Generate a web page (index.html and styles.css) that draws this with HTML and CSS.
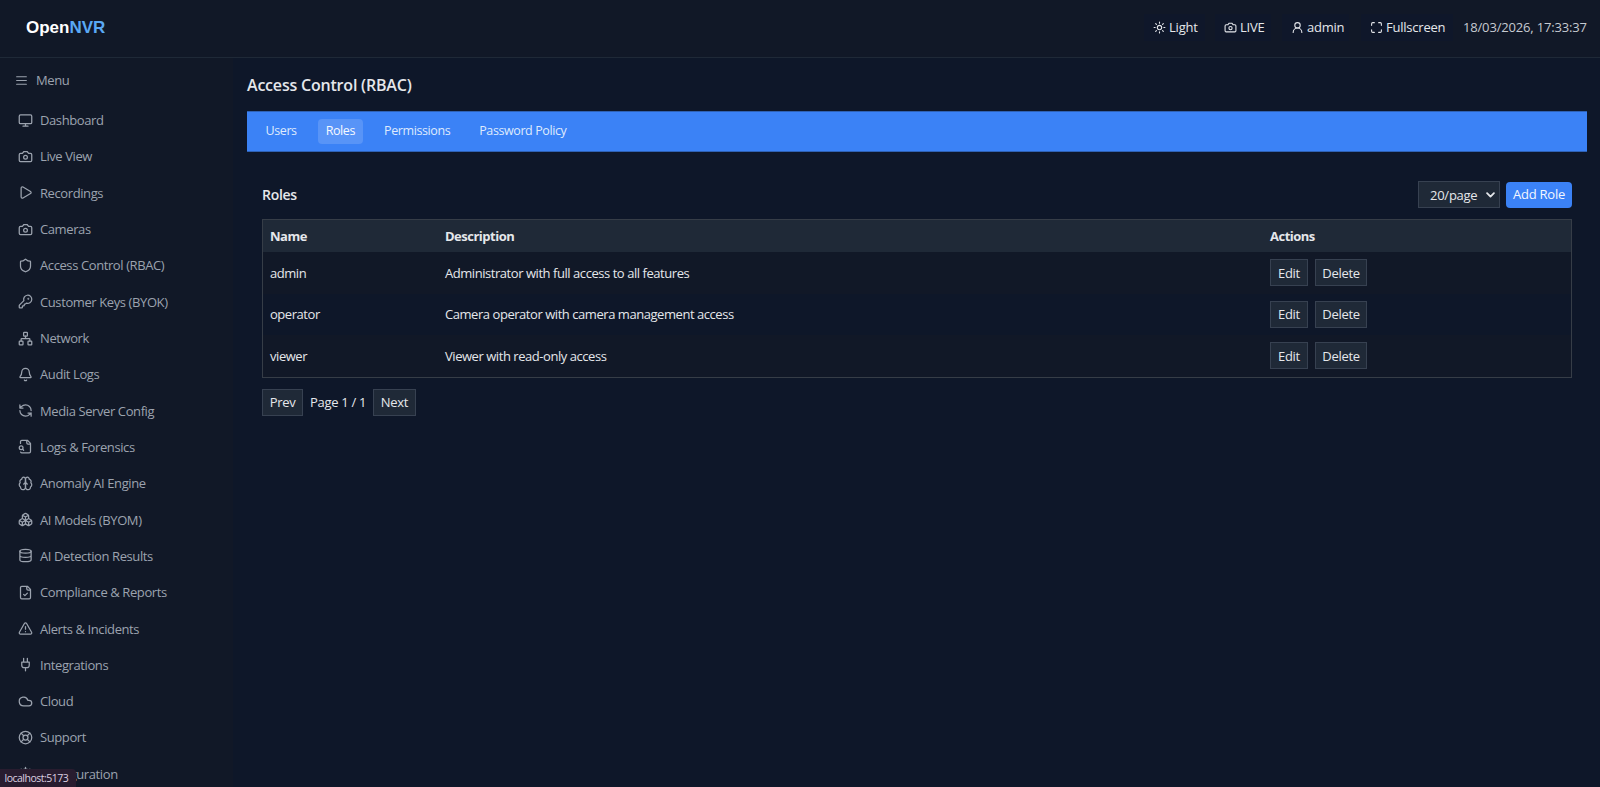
FILE: index.html
```html
<!DOCTYPE html>
<html lang="en">
<head>
  <meta charset="UTF-8" />
  <meta name="viewport" content="width=device-width, initial-scale=1" />
  <title>OpenNVR</title>
  <link rel="stylesheet" href="styles.css">
</head>
<body>

<header class="topbar">
  <div class="logo">Open<span>NVR</span></div>
  <div class="top-actions">
    <button class="chip light"><svg viewBox="0 0 24 24"><circle cx="12" cy="12" r="4"/><path d="M12 2v2M12 20v2M4.93 4.93l1.41 1.41M17.66 17.66l1.41 1.41M2 12h2M20 12h2M6.34 17.66l-1.41 1.41M19.07 4.93l-1.41 1.41"/></svg><span>Light</span></button>
    <button class="chip live"><svg viewBox="0 0 24 24"><path d="M14.5 4h-5L7 7H4a2 2 0 0 0-2 2v9a2 2 0 0 0 2 2h16a2 2 0 0 0 2-2V9a2 2 0 0 0-2-2h-3l-2.500-3z"/><circle cx="12" cy="13" r="3"/></svg><span>LIVE</span></button>
    <button class="chip user"><svg viewBox="0 0 24 24"><circle cx="12" cy="8" r="5"/><path d="M20 21a8 8 0 0 0-16 0"/></svg><span>admin</span></button>
    <button class="chip full"><svg viewBox="0 0 24 24"><path d="M8 3H5a2 2 0 0 0-2 2v3M21 8V5a2 2 0 0 0-2-2h-3M3 16v3a2 2 0 0 0 2 2h3M16 21h3a2 2 0 0 0 2-2v-3"/></svg><span>Fullscreen</span></button>
    <span class="clock">18/03/2026, 17:33:37</span>
  </div>
</header>

<div class="layout">
  <aside class="sidebar">
    <div class="menu-toggle"><svg viewBox="0 0 24 24"><path d="M3 5h18M3 12h18M3 19h18"/></svg><span>Menu</span></div>
    <nav class="menu">
      <a><svg viewBox="0 0 24 24"><rect x="2" y="3" width="20" height="14" rx="2"/><path d="M8 21h8M12 17v4"/></svg><span>Dashboard</span></a>
      <a><svg viewBox="0 0 24 24"><path d="M14.5 4h-5L7 7H4a2 2 0 0 0-2 2v9a2 2 0 0 0 2 2h16a2 2 0 0 0 2-2V9a2 2 0 0 0-2-2h-3l-2.500-3z"/><circle cx="12" cy="13" r="3"/></svg><span>Live View</span></a>
      <a><svg viewBox="0 0 24 24"><path d="M5 5a2 2 0 0 1 3.008-1.728l11.997 6.998a2 2 0 0 1 .003 3.458l-12 7A2 2 0 0 1 5 19z"/></svg><span>Recordings</span></a>
      <a><svg viewBox="0 0 24 24"><path d="M14.5 4h-5L7 7H4a2 2 0 0 0-2 2v9a2 2 0 0 0 2 2h16a2 2 0 0 0 2-2V9a2 2 0 0 0-2-2h-3l-2.500-3z"/><circle cx="12" cy="13" r="3"/></svg><span>Cameras</span></a>
      <a><svg viewBox="0 0 24 24"><path d="M20 13c0 5-3.500 7.500-7.660 8.950a1 1 0 0 1-.67-.01C7.500 20.500 4 18 4 13V6a1 1 0 0 1 1-1c2 0 4.500-1.200 6.240-2.720a1.170 1.170 0 0 1 1.520 0C14.510 3.810 17 5 19 5a1 1 0 0 1 1 1z"/></svg><span>Access Control (RBAC)</span></a>
      <a><svg viewBox="0 0 24 24"><path d="M2.586 17.414A2 2 0 0 0 2 18.828V21a1 1 0 0 0 1 1h3a1 1 0 0 0 1-1v-1a1 1 0 0 1 1-1h1a1 1 0 0 0 1-1v-1a1 1 0 0 1 1-1h.172a2 2 0 0 0 1.414-.586l.814-.814a6.500 6.500 0 1 0-4-4z"/><circle cx="16.500" cy="7.500" r=".5" fill="currentColor"/></svg><span>Customer Keys (BYOK)</span></a>
      <a><svg viewBox="0 0 24 24"><rect x="16" y="16" width="6" height="6" rx="1"/><rect x="2" y="16" width="6" height="6" rx="1"/><rect x="9" y="2" width="6" height="6" rx="1"/><path d="M5 16v-3a1 1 0 0 1 1-1h12a1 1 0 0 1 1 1v3M12 12V8"/></svg><span>Network</span></a>
      <a><svg viewBox="0 0 24 24"><path d="M10.268 21a2 2 0 0 0 3.464 0M3.262 15.326A1 1 0 0 0 4 17h16a1 1 0 0 0 .74-1.673C19.410 13.956 18 12.499 18 8A6 6 0 0 0 6 8c0 4.499-1.411 5.956-2.738 7.326"/></svg><span>Audit Logs</span></a>
      <a><svg viewBox="0 0 24 24"><path d="M21 12a9 9 0 0 0-9-9 9.750 9.750 0 0 0-6.740 2.740L3 8M3 3v5h5M3 12a9 9 0 0 0 9 9 9.750 9.750 0 0 0 6.740-2.740L21 16M16 16h5v5"/></svg><span>Media Server Config</span></a>
      <a><svg viewBox="0 0 24 24"><path d="M14 2v4a2 2 0 0 0 2 2h4M4.268 21a2 2 0 0 0 1.727 1H18a2 2 0 0 0 2-2V7l-5-5H6a2 2 0 0 0-2 2v3M9 18l-1.500-1.500"/><circle cx="5" cy="14" r="3"/></svg><span>Logs &amp; Forensics</span></a>
      <a><svg viewBox="0 0 24 24"><path d="M12 5a3 3 0 1 0-5.997.125 4 4 0 0 0-2.526 5.770 4 4 0 0 0 .556 6.588A4 4 0 1 0 12 18Z"/><path d="M12 5a3 3 0 1 1 5.997.125 4 4 0 0 1 2.526 5.770 4 4 0 0 1-.556 6.588A4 4 0 1 1 12 18Z"/><path d="M15 13a4.500 4.500 0 0 1-3-4 4.500 4.500 0 0 1-3 4"/></svg><span>Anomaly AI Engine</span></a>
      <a><svg viewBox="0 0 24 24"><path d="M2.970 12.920A2 2 0 0 0 2 14.630v3.240a2 2 0 0 0 .97 1.710l3 1.800a2 2 0 0 0 2.060 0L12 19v-5.500l-5-3zM7 16.500l-4.740-2.850M7 16.500l5-3M7 16.500v5.170M12 13.500V19l3.970 2.380a2 2 0 0 0 2.060 0l3-1.800a2 2 0 0 0 .97-1.710v-3.240a2 2 0 0 0-.97-1.710L17 10.500zM17 16.500l-5-3M17 16.500l4.740-2.850M17 16.500v5.170M7.970 4.420A2 2 0 0 0 7 6.130v4.370l5 3 5-3V6.130a2 2 0 0 0-.97-1.710l-3-1.800a2 2 0 0 0-2.060 0zM12 8L7.260 5.150M12 8l4.740-2.850M12 13.500V8"/></svg><span>AI Models (BYOM)</span></a>
      <a><svg viewBox="0 0 24 24"><ellipse cx="12" cy="5" rx="9" ry="3"/><path d="M3 5v14a9 3 0 0 0 18 0V5M3 12a9 3 0 0 0 18 0"/></svg><span>AI Detection Results</span></a>
      <a><svg viewBox="0 0 24 24"><path d="M15 2H6a2 2 0 0 0-2 2v16a2 2 0 0 0 2 2h12a2 2 0 0 0 2-2V7zM14 2v4a2 2 0 0 0 2 2h4M9 15l2 2 4-4"/></svg><span>Compliance &amp; Reports</span></a>
      <a><svg viewBox="0 0 24 24"><path d="M21.730 18l-8-14a2 2 0 0 0-3.480 0l-8 14A2 2 0 0 0 4 21h16a2 2 0 0 0 1.730-3M12 9v4M12 17h.01"/></svg><span>Alerts &amp; Incidents</span></a>
      <a><svg viewBox="0 0 24 24"><path d="M12 22v-5M9 8V2M15 8V2M18 8v5a4 4 0 0 1-4 4h-4a4 4 0 0 1-4-4V8Z"/></svg><span>Integrations</span></a>
      <a><svg viewBox="0 0 24 24"><path d="M17.500 19H9a7 7 0 1 1 6.710-9h1.790a4.500 4.500 0 1 1 0 9Z"/></svg><span>Cloud</span></a>
      <a><svg viewBox="0 0 24 24"><circle cx="12" cy="12" r="10"/><path d="M4.930 4.930l4.240 4.240M14.830 9.170l4.240-4.240M14.830 14.830l4.240 4.240M9.170 14.830l-4.240 4.240"/><circle cx="12" cy="12" r="4"/></svg><span>Support</span></a>
      <a><svg viewBox="0 0 24 24"><circle cx="12" cy="12" r="7"/><circle cx="12" cy="12" r="3"/><path d="M12 2v3M12 19v3M2 12h3M19 12h3M5 5l2 2M17 17l2 2M5 19l2-2M17 7l2-2"/></svg><span>Configuration</span></a>
    </nav>
  </aside>

  <main class="content">
    <h1>Access Control (RBAC)</h1>
    <nav class="tabs">
      <a>Users</a>
      <a class="active">Roles</a>
      <a>Permissions</a>
      <a>Password Policy</a>
    </nav>

    <section class="panel">
      <div class="panel-head">
        <h2>Roles</h2>
        <div class="tools">
          <div class="page-size"><span>20/page</span><svg viewBox="0 0 10 6"><path d="M1.200 1l3.800 3.700L8.800 1"/></svg></div>
          <button class="add">Add Role</button>
        </div>
      </div>

      <table>
        <thead>
          <tr><th class="col-name">Name</th><th class="col-desc">Description</th><th>Actions</th></tr>
        </thead>
        <tbody>
          <tr><td>admin</td><td>Administrator with full access to all features</td><td><div class="actions"><button class="btn edit">Edit</button><button class="btn delete">Delete</button></div></td></tr>
          <tr><td>operator</td><td>Camera operator with camera management access</td><td><div class="actions"><button class="btn edit">Edit</button><button class="btn delete">Delete</button></div></td></tr>
          <tr><td>viewer</td><td>Viewer with read-only access</td><td><div class="actions"><button class="btn edit">Edit</button><button class="btn delete">Delete</button></div></td></tr>
        </tbody>
      </table>

      <div class="pager">
        <button class="btn prev">Prev</button>
        <span>Page 1 / 1</span>
        <button class="btn next">Next</button>
      </div>
    </section>
  </main>
</div>

<div class="status">localhost:5173</div>

</body>
</html>
```
FILE: styles.css
```css
* {
  box-sizing: border-box;
}
body {
  margin: 0;
  height: 100vh;
  overflow: hidden;
  background: #0e1729;
  color: #e5e7eb;
  font-family: "Open Sans", "Noto Sans", sans-serif;
  font-size: 13px;
  line-height: 20px;
  letter-spacing: -0.4px;
}
svg {
  fill: none;
  stroke: currentColor;
  stroke-width: 2;
  stroke-linecap: round;
  stroke-linejoin: round;
  flex: none;
}
button {
  font: inherit;
  letter-spacing: inherit;
  color: inherit;
  padding: 0;
  border: none;
  white-space: nowrap;
}
.topbar {
  height: 58px;
  display: flex;
  align-items: center;
  justify-content: space-between;
  padding: 0 13px 2px 26px;
  background: #111827;
  border-bottom: 1px solid #1f2937;
}
.logo {
  padding-top: 1px;
  font-family: "Liberation Sans", Arial, sans-serif;
  font-size: 17px;
  font-weight: bold;
  letter-spacing: 0;
  color: #fff;
}
.logo span {
  color: #5aa9f5;
}
.top-actions {
  display: flex;
  align-items: center;
  letter-spacing: -0.22px;
}
.chip {
  display: flex;
  align-items: center;
  gap: 3px;
  height: 27px;
  padding: 0 0 0 9px;
  background: #0f172a;
}
.chip span,
.clock {
  margin-top: -2px;
}
.chip svg {
  width: 13px;
  height: 13px;
}
.light { width: 61px; margin-right: 10px; }
.live { width: 56px; margin-right: 11px; }
.user { width: 67px; margin-right: 12px; }
.full { width: 92px; margin-right: 10px; }
.clock {
  width: 124px;
  color: #c6cad1;
  letter-spacing: -0.17px;
  white-space: nowrap;
}

.layout {
  display: flex;
  height: calc(100vh - 58px);
}
.sidebar {
  width: 233px;
  flex: none;
  background: #111827;
  color: #9ca3af;
}
.menu-toggle {
  display: flex;
  align-items: center;
  gap: 8px;
  height: 44px;
  padding-left: 15px;
}
.menu-toggle svg {
  width: 13px;
  height: 13px;
}
.menu a {
  display: flex;
  align-items: center;
  gap: 7px;
  height: 36.32px;
  padding-left: 18px;
}
.menu svg {
  width: 15px;
  height: 15px;
}

.content {
  flex: 1;
  padding: 15px 13px 0 14px;
}
h1 {
  margin: 0 0 14px;
  font-size: 16px;
  font-weight: 600;
  line-height: 24px;
  letter-spacing: -0.2px;
}
.tabs {
  display: flex;
  align-items: center;
  gap: 14px;
  height: 41px;
  padding: 0 11px 1px;
  background: #3b82f6;
  border-top: 1px solid #2f62b5;
  border-bottom: 1px solid #2f62b5;
  font-size: 12.5px;
}
.tabs a {
  padding: 2px 7.5px 3px;
  border-radius: 4px;
  color: #dfeafd;
}
.tabs .active {
  background: #5894f7;
  color: #f5f9ff;
}

.panel {
  padding: 29px 15px 0;
}
.panel-head {
  display: flex;
  align-items: center;
  justify-content: space-between;
  height: 28px;
  margin-bottom: 10px;
}
h2 {
  margin: 0;
  font-size: 14px;
  font-weight: 600;
  letter-spacing: -0.3px;
}
.tools {
  display: flex;
  align-items: center;
  gap: 6px;
  padding-bottom: 1px;
  letter-spacing: -0.25px;
}
.page-size {
  display: flex;
  align-items: center;
  justify-content: space-between;
  width: 82px;
  height: 27px;
  padding: 0 4px 0 11px;
  background: #1f2937;
  border: 1px solid #374151;
}
.page-size svg {
  width: 9px;
  height: 6px;
}
.add {
  width: 66px;
  height: 26px;
  padding-bottom: 2px;
  border-radius: 4px;
  background: #3b82f6;
  color: #f3f7ff;
}
table {
  width: 100%;
  table-layout: fixed;
  border-collapse: separate;
  border-spacing: 0;
  border: 1px solid #363d47;
}
th {
  height: 32px;
  padding: 0 7px 1px;
  background: #1f2937;
  text-align: left;
  font-weight: 700;
  letter-spacing: -0.5px;
}
.col-name { width: 175px; }
.col-desc { width: 825px; }
td {
  height: 41.6px;
  padding: 0 7px;
  letter-spacing: -0.45px;
}
tbody tr:nth-child(odd) {
  background: #111827;
}
.actions {
  display: flex;
  gap: 7px;
  letter-spacing: -0.3px;
}
.btn {
  height: 27px;
  background: #1f2937;
  border: 1px solid #374151;
}
.edit { width: 38px; }
.delete { width: 52px; }
.pager {
  display: flex;
  align-items: center;
  gap: 7px;
  margin-top: 11px;
  letter-spacing: -0.3px;
}
.pager span {
  width: 56px;
  white-space: nowrap;
}
.prev { width: 41px; }
.next { width: 43px; }

.status {
  position: absolute;
  left: 0;
  bottom: 0;
  width: 76px;
  height: 18px;
  padding-left: 4.5px;
  border-top-right-radius: 4px;
  background: #281c2f;
  color: #dccfe0;
  font-size: 10.5px;
  line-height: 18px;
  letter-spacing: -0.5px;
}
```
